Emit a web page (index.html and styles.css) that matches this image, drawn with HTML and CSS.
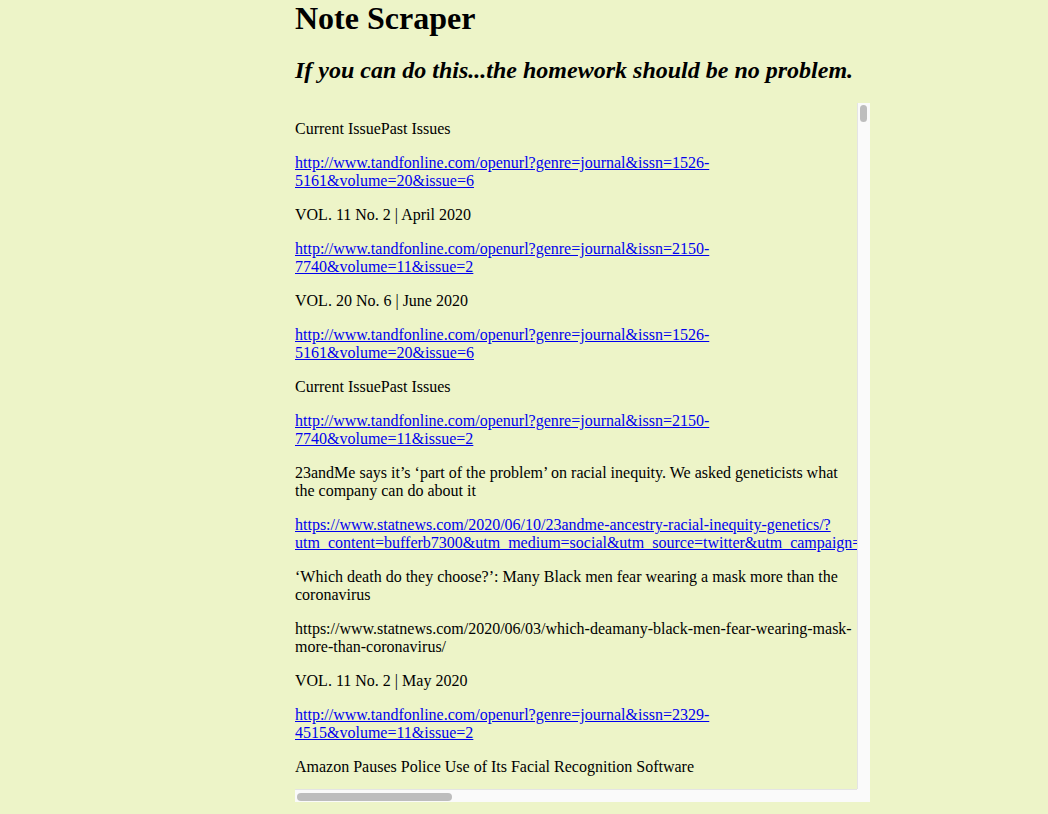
FILE: index.html
```html
<!DOCTYPE html>
<html lang="en">
<head>
<meta charset="utf-8">
<title>Note Scraper</title>
<link rel="stylesheet" href="styles.css">
</head>
<body>
<main class="page">
  <h1 class="title">Note Scraper</h1>
  <h2 class="tagline">If you can do this...the homework should be no problem.</h2>
  <div class="scroller">
    <div class="viewport">
      <p class="note">Current IssuePast Issues</p>
      <p class="note"><a href="#">http://www.tandfonline.com/openurl?genre=journal&amp;issn=1526-5161&amp;volume=20&amp;issue=6</a></p>
      <p class="note">VOL. 11 No. 2 | April 2020</p>
      <p class="note"><a href="#">http://www.tandfonline.com/openurl?genre=journal&amp;issn=2150-7740&amp;volume=11&amp;issue=2</a></p>
      <p class="note">VOL. 20 No. 6 | June 2020</p>
      <p class="note"><a href="#">http://www.tandfonline.com/openurl?genre=journal&amp;issn=1526-5161&amp;volume=20&amp;issue=6</a></p>
      <p class="note">Current IssuePast Issues</p>
      <p class="note"><a href="#">http://www.tandfonline.com/openurl?genre=journal&amp;issn=2150-7740&amp;volume=11&amp;issue=2</a></p>
      <p class="note">23andMe says it’s ‘part of the problem’ on racial inequity. We asked geneticists what the company can do about it</p>
      <p class="note"><a href="#">https://www.statnews.com/2020/06/10/23andme-ancestry-racial-inequity-genetics/?utm_content=bufferb7300&amp;utm_medium=social&amp;utm_source=twitter&amp;utm_campaign=twitter</a></p>
      <p class="note">‘Which death do they choose?’: Many Black men fear wearing a mask more than the coronavirus</p>
      <p class="note">https://www.statnews.com/2020/06/03/which-deamany-black-men-fear-wearing-mask-more-than-coronavirus/</p>
      <p class="note">VOL. 11 No. 2 | May 2020</p>
      <p class="note"><a href="#">http://www.tandfonline.com/openurl?genre=journal&amp;issn=2329-4515&amp;volume=11&amp;issue=2</a></p>
      <p class="note">Amazon Pauses Police Use of Its Facial Recognition Software</p>
    </div>
    <div class="vbar"><div class="vthumb"></div></div>
    <div class="hbar"><div class="hthumb"></div></div>
    <div class="corner"></div>
  </div>
</main>
</body>
</html>
```

FILE: styles.css
```css
html, body {
  margin: 0;
  padding: 0;
}

body {
  background: #edf4c8;
  color: #000;
  font-family: "Liberation Serif", "Times New Roman", serif;
  font-size: 16px;
}

.page {
  margin-left: 295px;
  width: 575px;
}

.title {
  margin: 0;
  font-size: 32px;
  font-weight: bold;
  line-height: normal;
}

.tagline {
  margin: 20px 0 19px;
  font-size: 24px;
  font-weight: bold;
  font-style: italic;
  line-height: normal;
}

.scroller {
  display: grid;
  grid-template-columns: 562px 13px;
  grid-template-rows: 686px 13px;
}

.viewport {
  overflow: hidden;
  padding-top: 1px;
}

.note {
  margin: 16px 0;
  white-space: normal;
}

.note a {
  color: #0000ee;
}

.vbar {
  background: #fafafa;
  border-left: 1px solid #e4e4e4;
  padding: 2px 2px 0 2px;
}

.vthumb {
  width: 7px;
  height: 17px;
  border-radius: 4px;
  background: #bdbdbd;
}

.hbar {
  background: #fafafa;
  border-top: 1px solid #e4e4e4;
  padding: 3px 0 0 2px;
}

.hthumb {
  width: 155px;
  height: 8px;
  border-radius: 4px;
  background: #bdbdbd;
}

.corner {
  background: #fafafa;
}
```
